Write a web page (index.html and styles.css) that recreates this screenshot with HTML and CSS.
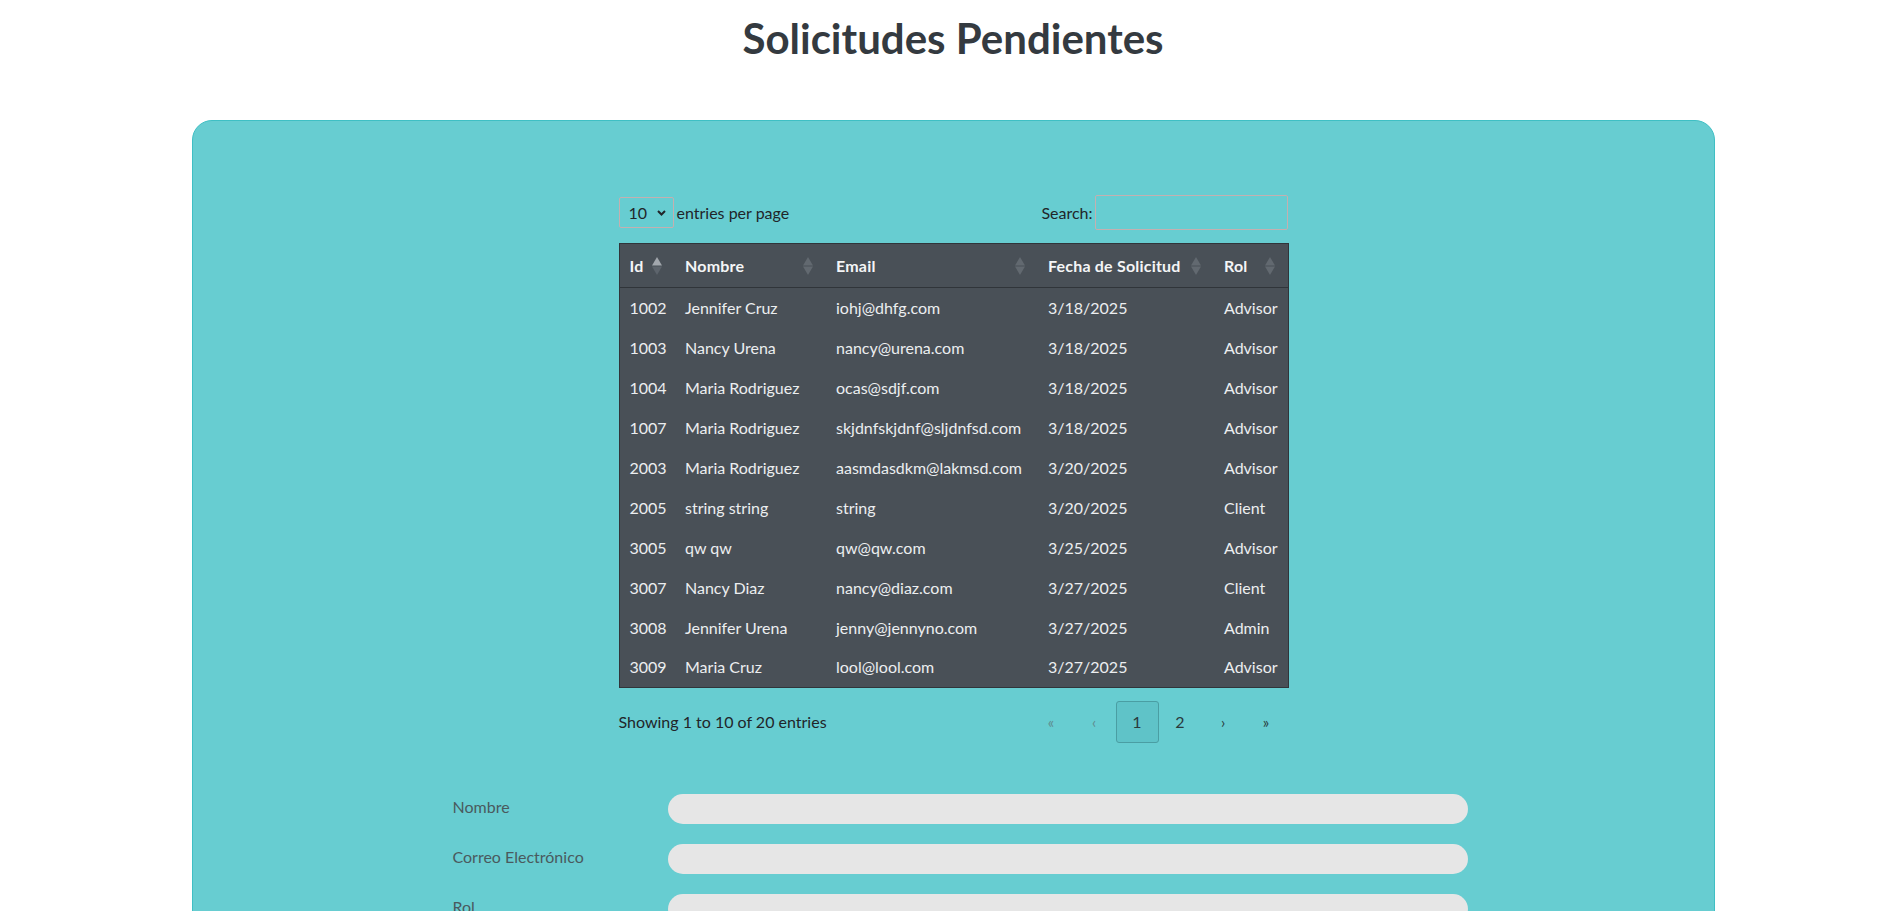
FILE: index.html
```html
<!DOCTYPE html>
<html lang="es">
<head>
<meta charset="utf-8">
<title>Solicitudes Pendientes</title>
<link rel="stylesheet" href="styles.css">
</head>
<body>
<h1 class="title">Solicitudes Pendientes</h1>
<main class="panel">
  <div class="dt">
    <div class="dt-top">
      <div class="dt-length">
        <div class="fake-select"><span>10</span>
          <svg width="9" height="6" viewBox="0 0 9 6"><path d="M1 1 L4.5 4.5 L8 1" fill="none" stroke="#212529" stroke-width="2"/></svg>
        </div>
        <span>entries per page</span>
      </div>
      <div class="dt-search">
        <span>Search:</span>
        <input class="search-input" type="text">
      </div>
    </div>
    <table class="dt-table">
      <colgroup>
        <col class="c-id"><col class="c-nombre"><col class="c-email"><col class="c-fecha"><col class="c-rol">
      </colgroup>
      <thead>
        <tr>
          <th><div class="th-in"><span>Id</span><svg class="sort asc" width="10" height="18" viewBox="0 0 10 18"><path class="up" d="M5 0 L10 8.5 H0Z"/><path class="down" d="M0 9.5 H10 L5 18Z"/></svg></div></th>
          <th><div class="th-in"><span>Nombre</span><svg class="sort" width="10" height="18" viewBox="0 0 10 18"><path class="up" d="M5 0 L10 8.5 H0Z"/><path class="down" d="M0 9.5 H10 L5 18Z"/></svg></div></th>
          <th><div class="th-in"><span>Email</span><svg class="sort" width="10" height="18" viewBox="0 0 10 18"><path class="up" d="M5 0 L10 8.5 H0Z"/><path class="down" d="M0 9.5 H10 L5 18Z"/></svg></div></th>
          <th><div class="th-in"><span>Fecha de Solicitud</span><svg class="sort" width="10" height="18" viewBox="0 0 10 18"><path class="up" d="M5 0 L10 8.5 H0Z"/><path class="down" d="M0 9.5 H10 L5 18Z"/></svg></div></th>
          <th><div class="th-in"><span>Rol</span><svg class="sort" width="10" height="18" viewBox="0 0 10 18"><path class="up" d="M5 0 L10 8.5 H0Z"/><path class="down" d="M0 9.5 H10 L5 18Z"/></svg></div></th>
        </tr>
      </thead>
      <tbody>
        <tr><td>1002</td><td>Jennifer Cruz</td><td>iohj@dhfg.com</td><td>3/18/2025</td><td>Advisor</td></tr>
        <tr><td>1003</td><td>Nancy Urena</td><td>nancy@urena.com</td><td>3/18/2025</td><td>Advisor</td></tr>
        <tr><td>1004</td><td>Maria Rodriguez</td><td>ocas@sdjf.com</td><td>3/18/2025</td><td>Advisor</td></tr>
        <tr><td>1007</td><td>Maria Rodriguez</td><td>skjdnfskjdnf@sljdnfsd.com</td><td>3/18/2025</td><td>Advisor</td></tr>
        <tr><td>2003</td><td>Maria Rodriguez</td><td>aasmdasdkm@lakmsd.com</td><td>3/20/2025</td><td>Advisor</td></tr>
        <tr><td>2005</td><td>string string</td><td>string</td><td>3/20/2025</td><td>Client</td></tr>
        <tr><td>3005</td><td>qw qw</td><td>qw@qw.com</td><td>3/25/2025</td><td>Advisor</td></tr>
        <tr><td>3007</td><td>Nancy Diaz</td><td>nancy@diaz.com</td><td>3/27/2025</td><td>Client</td></tr>
        <tr><td>3008</td><td>Jennifer Urena</td><td>jenny@jennyno.com</td><td>3/27/2025</td><td>Admin</td></tr>
        <tr><td>3009</td><td>Maria Cruz</td><td>lool@lool.com</td><td>3/27/2025</td><td>Advisor</td></tr>
      </tbody>
    </table>
    <div class="dt-bottom">
      <div class="dt-info">Showing 1 to 10 of 20 entries</div>
      <ul class="pager">
        <li class="pg disabled">«</li>
        <li class="pg disabled">‹</li>
        <li class="pg active">1</li>
        <li class="pg num">2</li>
        <li class="pg">›</li>
        <li class="pg">»</li>
      </ul>
    </div>
  </div>

  <form class="req-form">
    <label class="f-label">Nombre</label>
    <input class="f-input" type="text">
    <label class="f-label">Correo Electrónico</label>
    <input class="f-input" type="text">
    <label class="f-label">Rol</label>
    <input class="f-input" type="text">
  </form>
</main>
</body>
</html>
```
FILE: styles.css
```css
* { box-sizing: border-box; }
html, body { margin: 0; padding: 0; }
body {
  font-family: "Lato", "Open Sans", sans-serif;
  font-size: 16px;
  line-height: 1.5;
  color: #212529;
  background: #fff;
  padding-left: 5px;
}
.title {
  margin: 13px 0 0;
  text-align: center;
  font-size: 42px;
  line-height: 50px;
  font-weight: 700;
  color: #343a40;
}
.panel {
  width: 1523px;
  margin: 57px auto 0;
  background: #67cdd1;
  border: 1px solid #3fbfc4;
  border-radius: 20px;
  padding: 74px 0 120px;
}
.dt {
  width: 669px;
  margin: 0 auto;
}
.dt-top {
  display: flex;
  justify-content: space-between;
  align-items: center;
  height: 35px;
  margin-bottom: 13px;
}
.dt-length {
  display: flex;
  align-items: center;
  gap: 3px;
  font-size: 16px;
}
.fake-select {
  width: 55px;
  height: 31px;
  border: 1px solid #c4b0b0;
  border-radius: 2px;
  display: flex;
  align-items: center;
  justify-content: space-between;
  padding: 0 7px 0 9px;
  font-size: 16px;
}
.dt-search {
  display: flex;
  align-items: center;
  gap: 2px;
  font-size: 16px;
}
.search-input {
  width: 193px;
  height: 35px;
  border: 1px solid #c4b0b0;
  border-radius: 2px;
  background: transparent;
  outline: none;
}
.dt-table {
  width: 669px;
  border-collapse: collapse;
  table-layout: fixed;
  background: #495057;
  border: 1px solid #30353a;
  color: #eceef0;
  font-size: 16px;
}
.c-id { width: 56px; }
.c-nombre { width: 151px; }
.c-email { width: 212px; }
.c-fecha { width: 176px; }
.c-rol { width: 74px; }
.dt-table th {
  height: 44px;
  padding: 0 13px 0 10px;
  text-align: left;
  font-weight: 700;
  font-size: 16px;
  letter-spacing: 0.2px;
  color: #f4f5f6;
  border-bottom: 1px solid #30353a;
  white-space: nowrap;
}
.th-in {
  display: flex;
  align-items: center;
  justify-content: space-between;
}
.sort { flex: none; }
.sort path { fill: #626970; }
.sort.asc .up { fill: #a2a7ad; }
.sort.asc .down { fill: #5d646c; }
.dt-table td {
  height: 40px;
  padding: 0 10px;
  white-space: nowrap;
  overflow: hidden;
}
.dt-bottom {
  display: flex;
  justify-content: space-between;
  align-items: center;
  margin-top: 13px;
}
.dt-info { font-size: 16px; }
.pager {
  list-style: none;
  margin: 0;
  padding: 0;
  display: flex;
}
.pg {
  width: 43px;
  height: 42px;
  display: flex;
  align-items: center;
  justify-content: center;
  border: 1px solid transparent;
  border-radius: 3px;
  font-size: 15px;
  color: #2a3a3c;
}
.pg.disabled { color: #5f8a8d; }
.pg.active {
  border-color: #4a9ea3;
  background: #5fc3c8;
  font-size: 16px;
}
.pg.num { font-size: 16px; }
.req-form {
  width: 1015px;
  margin: 51px auto 0;
  padding-left: 14px;
  box-sizing: content-box;
  display: grid;
  grid-template-columns: 215px 800px;
  row-gap: 20px;
  align-items: center;
}
.f-label {
  font-size: 16px;
  color: #4a5a5e;
  margin-bottom: 4px;
}
.f-input {
  height: 30px;
  border: none;
  border-radius: 15px;
  background: #e6e6e6;
  outline: none;
}
```
